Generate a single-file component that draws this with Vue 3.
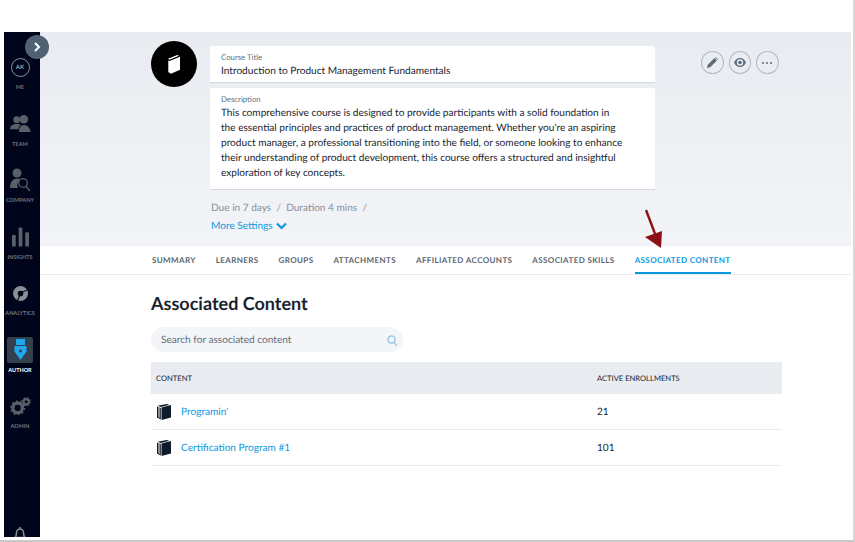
<script setup>
const navItems = [
  { key: 'me', label: 'ME' },
  { key: 'team', label: 'TEAM' },
  { key: 'company', label: 'COMPANY' },
  { key: 'insights', label: 'INSIGHTS' },
  { key: 'analytics', label: 'ANALYTICS' },
  { key: 'author', label: 'AUTHOR', active: true },
  { key: 'admin', label: 'ADMIN' },
]

const tabs = [
  { label: 'SUMMARY' },
  { label: 'LEARNERS' },
  { label: 'GROUPS' },
  { label: 'ATTACHMENTS' },
  { label: 'AFFILIATED ACCOUNTS' },
  { label: 'ASSOCIATED SKILLS' },
  { label: 'ASSOCIATED CONTENT', active: true },
]

const rows = [
  { name: "Programin'", count: 21 },
  { name: 'Certification Program #1', count: 101 },
]
</script>

<template>
  <div class="page">
    <div class="window">
      <aside class="sidebar">
        <div v-for="item in navItems" :key="item.key" class="nav-item" :class="{ active: item.active }">
          <div class="nav-icon">
            <div v-if="item.key === 'me'" class="me-badge">AK</div>
            <svg v-else-if="item.key === 'team'" width="21" height="19" viewBox="0 0 22 20" fill="#5a6068">
              <circle cx="7" cy="6" r="3.600" />
              <path d="M0 16c0-3.400 2.600-5 5-5.400h4c1 .2 1.800 .6 2.500 1.100-1.600 1-2.500 2.300-2.500 4.300z" />
              <circle cx="14.500" cy="5.500" r="4.500" />
              <path d="M9.500 19c-.4-4 1.600-7.400 5-7.400s6.500 2.400 7 7.400z" />
            </svg>
            <svg v-else-if="item.key === 'company'" width="22" height="24" viewBox="0 0 22 24" fill="#5a6068">
              <circle cx="8" cy="5" r="4.500" />
              <path d="M1 20c0-6 3-9.500 7-9.500 1.500 0 2.800 .4 3.800 1.200-2.800 1.200-4.300 5-2.800 8.300z" />
              <circle cx="14" cy="15" r="4.300" fill="none" stroke="#5a6068" stroke-width="1.300" />
              <path d="M17 18.500l4 4.500" stroke="#5a6068" stroke-width="1.300" />
            </svg>
            <svg v-else-if="item.key === 'insights'" width="17" height="20" viewBox="0 0 18 20" fill="#5a6068">
              <rect x="0" y="8" width="4" height="12" rx="1" />
              <rect x="7" y="0" width="4" height="20" rx="1" />
              <rect x="14" y="5" width="4" height="15" rx="1" />
            </svg>
            <svg v-else-if="item.key === 'analytics'" width="15" height="15" viewBox="0 0 16 16">
              <circle cx="8" cy="8" r="5.500" fill="none" stroke="#8a8f95" stroke-width="5" />
              <path d="M9 7.500L16 4.500V3.400L8.500 6.500zM7.200 8.500L4 16H5.300L8.300 9z" fill="#00051b" />
              <path d="M8 6.500a1.500 1.500 0 1 1 0 3 1.500 1.500 0 0 1 0-3z" fill="#00051b" />
            </svg>
            <div v-else-if="item.key === 'author'" class="author-box">
              <svg width="13" height="21" viewBox="0 0 13 21">
                <rect x="2" y="0" width="9" height="6" fill="#1fa8ee" />
                <path d="M.5 7h12v5.500L6.500 21 .5 12.500z" fill="#1fa8ee" />
                <circle cx="6.500" cy="12" r="1.500" fill="#33414e" />
              </svg>
            </div>
            <svg v-else width="21" height="18" viewBox="0 0 22 19">
              <circle cx="8" cy="11.500" r="5" fill="none" stroke="#5a6068" stroke-width="3.400" />
              <circle cx="8" cy="11.500" r="7" fill="none" stroke="#5a6068" stroke-width="1.800" stroke-dasharray="2.200 2.200" />
              <circle cx="17" cy="5" r="2.800" fill="none" stroke="#5a6068" stroke-width="2.200" />
              <circle cx="17" cy="5" r="4.300" fill="none" stroke="#5a6068" stroke-width="1.300" stroke-dasharray="1.600 1.800" />
            </svg>
          </div>
          <span class="nav-label">{{ item.label }}</span>
        </div>
        <svg class="bell" width="12" height="14" viewBox="0 0 12 14" fill="none" stroke="#8a8f95" stroke-width="1.500">
          <path d="M1 11.500c1.500-1.500 1.500-3 1.500-5a3.500 3.500 0 0 1 7 0c0 2 0 3.500 1.500 5z" />
          <path d="M6 1V2.500" />
        </svg>
      </aside>

      <button class="toggle">
        <svg width="8" height="10" viewBox="0 0 8 10" fill="none" stroke="#fff" stroke-width="2">
          <path d="M2 1l4 4-4 4" />
        </svg>
      </button>

      <main class="main">
        <header class="course-head">
          <div class="course-icon">
            <svg width="12" height="19" viewBox="0 0 12 19" fill="#fff">
              <path d="M0 3.700L9.400 0 11 .8 1.400 4.700z" />
              <path d="M.3 5.500L1.500 6 12 1.800V14.800L3 18.800 .3 17z" />
            </svg>
          </div>
          <div class="course-fields">
            <div class="field field-title">
              <label>Course Title</label>
              <div class="title-value">Introduction to Product Management Fundamentals</div>
            </div>
            <div class="field field-desc">
              <label>Description</label>
              <p>This comprehensive course is designed to provide participants with a solid foundation in the essential principles and practices of product management. Whether you're an aspiring product manager, a professional transitioning into the field, or someone looking to enhance their understanding of product development, this course offers a structured and insightful exploration of key concepts.</p>
            </div>
            <div class="meta">Due in 7 days&nbsp; /&nbsp; Duration 4 mins&nbsp; /</div>
            <a class="more">
              More Settings
              <svg width="11" height="8" viewBox="0 0 11 8" fill="none" stroke="#0a97e0" stroke-width="2.200">
                <path d="M1 1.500l4.500 4.500L10 1.500" />
              </svg>
            </a>
          </div>
          <div class="actions">
            <button class="round">
              <svg width="11" height="11" viewBox="0 0 11 11" fill="#5c6b7a">
                <path d="M0 11l.8-3.200L7.500 1.100l2.400 2.400-6.700 6.700zM8.200 .4l.5-.4 2.300 2.300-.5 .5z" />
              </svg>
            </button>
            <button class="round">
              <svg width="12" height="9" viewBox="0 0 12 9">
                <path fill-rule="evenodd" fill="#5c6b7a" d="M6 0c2.800 0 4.900 2 6 4.500C10.900 7 8.800 9 6 9S1.100 7 0 4.500C1.100 2 3.200 0 6 0zm0 1.300a3.200 3.200 0 1 0 0 6.400 3.200 3.200 0 0 0 0-6.400z" />
                <circle cx="6" cy="4.500" r="1.800" fill="#5c6b7a" />
              </svg>
            </button>
            <button class="round dots">
              <i></i><i></i><i></i>
            </button>
          </div>
        </header>

        <nav class="tabs">
          <a v-for="tab in tabs" :key="tab.label" class="tab" :class="{ active: tab.active }">{{ tab.label }}</a>
        </nav>

        <section class="content">
          <h1>Associated Content</h1>
          <div class="search">
            <span>Search for associated content</span>
            <svg width="10" height="11" viewBox="0 0 10 11" fill="none" stroke="#8cc6ea" stroke-width="1.300">
              <circle cx="4.500" cy="4.500" r="3.600" />
              <path d="M7 7.500l2.500 3" />
            </svg>
          </div>
          <div class="table">
            <div class="table-head">
              <div class="col-name">CONTENT</div>
              <div class="col-count">ACTIVE ENROLLMENTS</div>
            </div>
            <div v-for="row in rows" :key="row.name" class="table-row">
              <div class="col-name">
                <svg class="book" width="14" height="16" viewBox="0 0 14 16">
                  <path d="M4.500 3.500L14 1V13.500L4.500 16z" fill="#0e1b2b" />
                  <path d="M0 2.500L3.800 4V15.500L0 13.500z" fill="#0e1b2b" />
                  <path d="M.5 1.700L9.800 0 12.400 .8 3.900 3z" fill="#0e1b2b" />
                  <path d="M1.500 2.800V13M2.500 3.300V14" stroke="#fff" stroke-width=".5" />
                </svg>
                <a>{{ row.name }}</a>
              </div>
              <div class="col-count">{{ row.count }}</div>
            </div>
          </div>
        </section>
      </main>

      <svg class="arrow" width="24" height="44" viewBox="0 0 24 44">
        <path d="M2 1L13 30" stroke="#8b1017" stroke-width="2.400" fill="none" />
        <path d="M1 28L18 22 17 39z" fill="#8b1017" />
      </svg>
    </div>
  </div>
</template>

<style>
html, body {
  margin: 0;
  background: #fff;
}
</style>

<style scoped>
.page {
  width: 855px;
  height: 542px;
  box-sizing: border-box;
  padding: 32px 4px 3px 4px;
  background: #fff;
  border-right: 2px solid #d9d9d9;
  border-bottom: 2px solid #c9c9c9;
  overflow: hidden;
  font-family: Lato, "Liberation Sans", sans-serif;
  text-rendering: geometricPrecision;
}

.window {
  position: relative;
  display: flex;
  width: 847px;
  height: 505px;
  background: #fff;
}

.sidebar {
  display: flex;
  flex-direction: column;
  align-items: center;
  flex: 0 0 36px;
  width: 36px;
  padding: 22px 4px 0 0;
  box-sizing: border-box;
  background: #00051b;
  overflow: hidden;
}

.nav-item {
  display: flex;
  flex: 0 0 56.5px;
  flex-direction: column;
  align-items: center;
  width: 100%;
}

.nav-icon {
  display: flex;
  align-items: center;
  justify-content: center;
  height: 26px;
  margin-bottom: 4px;
}

.nav-label {
  font-size: 5.500px;
  line-height: 8px;
  font-weight: 700;
  color: #6f747b;
  white-space: nowrap;
}

.nav-item.active .nav-label {
  color: #fff;
}

.me-badge {
  display: flex;
  align-items: center;
  justify-content: center;
  box-sizing: border-box;
  width: 19px;
  height: 19px;
  border: 1px solid #8a8f95;
  border-radius: 50%;
  color: #9a9fa5;
  font-size: 6px;
  font-weight: 700;
}

.author-box {
  display: flex;
  align-items: center;
  justify-content: center;
  width: 26px;
  height: 26px;
  border-radius: 2px;
  background: #33414e;
}

.bell {
  margin-top: auto;
  margin-bottom: -3px;
  flex: none;
}

.toggle {
  position: absolute;
  left: 21px;
  top: 3px;
  display: flex;
  align-items: center;
  justify-content: center;
  width: 24px;
  height: 24px;
  padding: 0;
  border: 0;
  border-radius: 50%;
  background: #4e6274;
}

.main {
  flex: 1;
  min-width: 0;
}

.course-head {
  display: flex;
  align-items: flex-start;
  box-sizing: border-box;
  height: 214px;
  padding: 9px 0 0 111px;
  background: linear-gradient(#e8ebf0, #f3f4f7);
}

.course-icon {
  display: flex;
  flex: none;
  align-items: center;
  justify-content: center;
  width: 46px;
  height: 46px;
  margin-right: 13px;
  border-radius: 50%;
  background: #000;
}

.course-fields {
  flex: 0 0 445px;
  padding-top: 5px;
}

.field {
  box-sizing: border-box;
  padding: 6px 11px 0;
  background: #fff;
  border-radius: 2px 2px 0 0;
  border-bottom: 1px solid #d5d9df;
}

.field label {
  display: block;
  font-size: 7.800px;
  line-height: 10px;
  color: #626d78;
}

.field-title {
  height: 37px;
  margin-bottom: 5px;
}

.title-value {
  margin-top: 1.500px;
  font-size: 10.100px;
  line-height: 14px;
  color: #17232f;
}

.field-desc {
  height: 102px;
}

.field-desc p {
  width: 404px;
  margin: 1.500px 0 0;
  font-size: 10.100px;
  line-height: 15px;
  color: #17232f;
}

.meta {
  margin: 11px 0 0 1px;
  font-size: 10.100px;
  line-height: 14px;
  color: #88909a;
}

.more {
  display: flex;
  align-items: center;
  gap: 3px;
  margin: 4px 0 0 1px;
  font-size: 10.100px;
  line-height: 14px;
  color: #0a97e0;
}

.actions {
  display: flex;
  gap: 5px;
  margin: 10px 0 0 46px;
}

.round {
  display: flex;
  align-items: center;
  justify-content: center;
  box-sizing: border-box;
  width: 22.500px;
  height: 23px;
  padding: 0;
  border: 1px solid #b4bbc3;
  border-radius: 50%;
  background: transparent;
}

.dots {
  gap: 2px;
}

.dots i {
  width: 2px;
  height: 2px;
  border-radius: 50%;
  background: #5c6b7a;
}

.tabs {
  display: flex;
  gap: 20px;
  box-sizing: border-box;
  height: 29px;
  padding-left: 112px;
  border-bottom: 1px solid #e8eaee;
}

.tab {
  box-sizing: border-box;
  height: 28px;
  padding-top: 8.500px;
  font-size: 8px;
  line-height: 11px;
  font-weight: 700;
  letter-spacing: .38px;
  color: #5b6570;
  white-space: nowrap;
}

.tab.active {
  color: #0a97e0;
  border-bottom: 2px solid #0a97e0;
}

.content {
  padding: 16px 69px 0 111px;
}

.content h1 {
  margin: 0 0 12px;
  font-size: 18px;
  line-height: 24px;
  font-weight: 700;
  color: #17232f;
}

.search {
  display: flex;
  align-items: center;
  justify-content: space-between;
  box-sizing: border-box;
  width: 252px;
  height: 25px;
  padding: 1px 6px 0 10px;
  border-radius: 13px;
  background: #f3f5f8;
  font-size: 10.100px;
  color: #626d78;
}

.table {
  margin-top: 10px;
}

.table-head,
.table-row {
  display: flex;
  align-items: center;
}

.table-head {
  height: 32px;
  padding-left: 5px;
  background: #e8ebf0;
  font-size: 7.600px;
  color: #17232f;
}

.table-row {
  box-sizing: border-box;
  height: 36px;
  padding-left: 5px;
  border-bottom: 1px solid #e8ebf0;
  font-size: 10.100px;
  color: #17232f;
}

.col-name {
  display: flex;
  flex: 0 0 441px;
  align-items: center;
}

.book {
  margin: 0 10px 0 1px;
}

.col-name a {
  color: #0a97e0;
}

.arrow {
  position: absolute;
  left: 640px;
  top: 177px;
}
</style>
